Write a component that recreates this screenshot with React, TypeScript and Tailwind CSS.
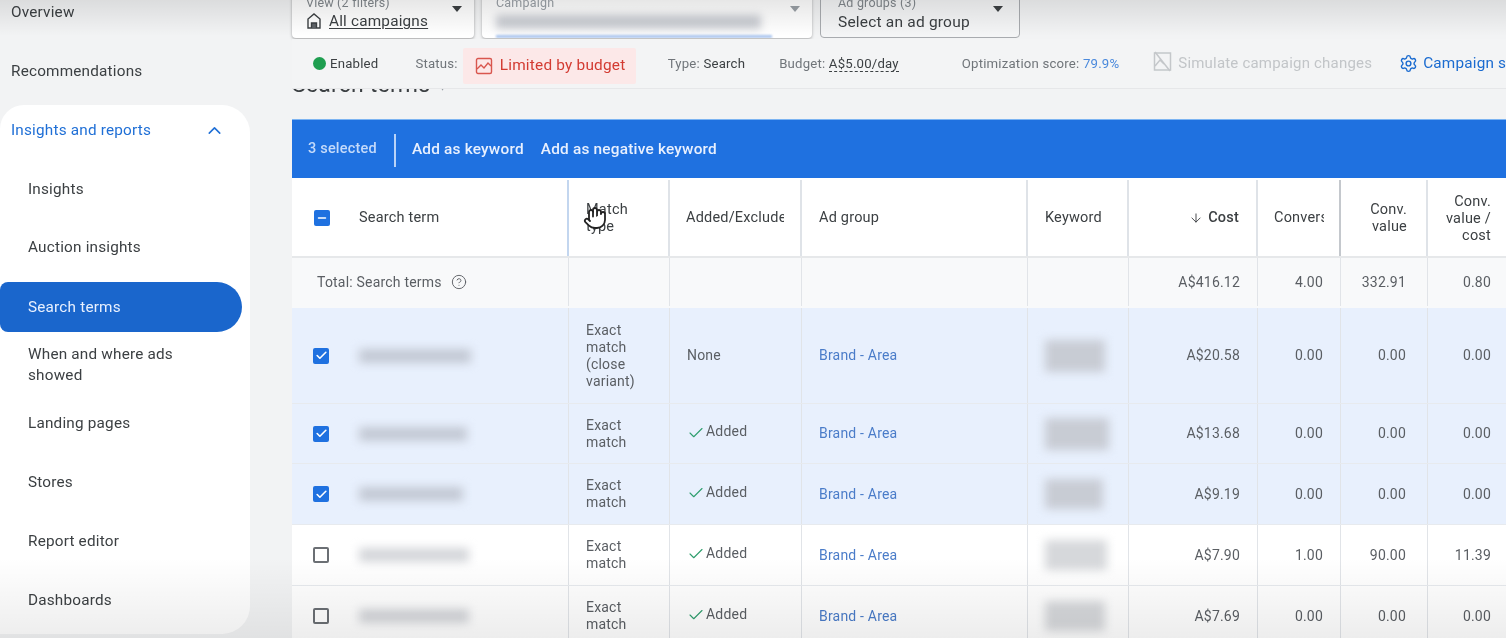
import { ChevronUp, ArrowDown, Check, Settings, HelpCircle, Hand, Minus } from "lucide-react";

const cols = "grid grid-cols-[277px_101px_132px_226px_101px_129px_83px_87px_78px]";
const cell = "border-r border-[#e1e4e8] flex items-center text-[14px]";
const gray = "text-[#5a5e63]";

const rows = [
  { h: "h-[96px]", checked: true, match: "Exact match (close variant)", added: false, cost: "A$20.58", c: "0.00", v: "0.00", r: "0.00", w: "w-[112px]", k: "h-[32px] w-[60px]" },
  { h: "h-[60px]", checked: true, match: "Exact match", added: true, cost: "A$13.68", c: "0.00", v: "0.00", r: "0.00", w: "w-[108px]", k: "h-[32px] w-[64px]" },
  { h: "h-[61px]", checked: true, match: "Exact match", added: true, cost: "A$9.19", c: "0.00", v: "0.00", r: "0.00", w: "w-[104px]", k: "h-[30px] w-[58px]" },
  { h: "h-[61px]", checked: false, match: "Exact match", added: true, cost: "A$7.90", c: "1.00", v: "90.00", r: "11.39", w: "w-[110px]", k: "h-[30px] w-[62px]" },
  { h: "h-[61px]", checked: false, match: "Exact match", added: true, cost: "A$7.69", c: "0.00", v: "0.00", r: "0.00", w: "w-[110px]", k: "h-[30px] w-[60px]" },
];

function NavItem({ label, className = "" }: { label: string; className?: string }) {
  return <div className={`pl-[28px] flex items-center text-[#3c4043] ${className}`}>{label}</div>;
}

export default function App() {
  return (
    <div className="relative w-[1506px] h-[638px] overflow-hidden flex bg-[#f2f3f4] font-['Roboto',sans-serif] text-[15.3px] tracking-[0.2px] blur-[0.4px]">
      {/* Sidebar */}
      <aside className="w-[292px] shrink-0 flex flex-col">
        <div className="h-[105px] pl-[11px] text-[#3c4043] flex flex-col">
          <div className="h-[25px] flex items-center">Overview</div>
          <div className="h-[59px] mt-[17px] flex items-center">Recommendations</div>
        </div>
        <div className="w-[250px] h-[529px] bg-white rounded-r-[28px] rounded-tl-[24px] flex flex-col">
          <div className="h-[50px] pl-[11px] pr-[25px] flex items-center justify-between text-[#1f6fd6]">
            <span>Insights and reports</span>
            <ChevronUp size={21} strokeWidth={1.8} />
          </div>
          <NavItem label="Insights" className="h-[58px] mt-[5px]" />
          <NavItem label="Auction insights" className="h-[58px]" />
          <div className="h-[50px] w-[242px] mt-[6px] bg-[#1a66cc] rounded-r-[25px] rounded-l-[8px] pl-[28px] flex items-center text-[#e8f0fe]">Search terms</div>
          <div className="h-[46px] mt-[10px] pl-[28px] pr-[60px] flex items-center leading-[21px] text-[#3c4043]">When and where ads showed</div>
          <NavItem label="Landing pages" className="h-[49px] mt-[11px]" />
          <NavItem label="Stores" className="h-[59px] mt-[5px]" />
          <NavItem label="Report editor" className="h-[59px]" />
          <NavItem label="Dashboards" className="h-[58px]" />
        </div>
      </aside>

      {/* Main */}
      <main className="flex-1 min-w-0 flex flex-col">
        {/* Selectors */}
        <div className="h-[39px] shrink-0 flex gap-[8px]">
          <div className="w-[182px] h-[50px] -mt-[12px] bg-white rounded-[4px] shadow-[0_1px_3px_rgba(0,0,0,0.35)] px-[14px] pt-[8px] relative">
            <div className="text-[12.5px] leading-[14px] text-[#80868b]">View (2 filters)</div>
            <div className="flex items-center gap-[7px] text-[#3c4043]">
              <svg width="16" height="18" viewBox="0 0 16 18" fill="none" stroke="#3c4043" strokeWidth="1.4"><path d="M2 16V7l6-5 6 5v9z" /><path d="M5.5 16v-5h5v5" fill="#5f6368" /></svg>
              <span className="underline underline-offset-2">All campaigns</span>
            </div>
            <div className="absolute right-[12px] top-[18px] border-x-[5px] border-x-transparent border-t-[6px] border-t-[#3c4043]" />
          </div>
          <div className="w-[330px] h-[50px] -mt-[12px] bg-white rounded-[4px] shadow-[0_1px_3px_rgba(0,0,0,0.3)] px-[14px] pt-[8px] relative overflow-hidden">
            <div className="text-[12.5px] leading-[14px] text-[#9aa0a6]">Campaign</div>
            <div className="mt-[5px] h-[14px] w-[265px] bg-[#c9ccd2] blur-[4px]" />
            <div className="absolute left-[14px] right-[40px] bottom-0 h-[3px] bg-[#a9c4ee] blur-[1px]" />
            <div className="absolute right-[12px] top-[18px] border-x-[5px] border-x-transparent border-t-[6px] border-t-[#9aa0a6]" />
          </div>
          <div className="w-[200px] h-[50px] -mt-[12px] bg-[#f4f5f6] border border-[#a8abaf] rounded-[4px] px-[17px] pt-[7px] relative">
            <div className="text-[12.5px] leading-[14px] text-[#80868b]">Ad groups (3)</div>
            <div className="mt-[1px] text-[15.5px] text-[#3c4043]">Select an ad group</div>
            <div className="absolute right-[16px] top-[17px] border-x-[5px] border-x-transparent border-t-[6px] border-t-[#3c4043]" />
          </div>
        </div>

        {/* Status bar */}
        <div className="relative z-10 h-[50px] shrink-0 bg-[#f3f4f5] border-b border-[#e6e7e9] flex items-center text-[13.2px] text-[#70757a] whitespace-nowrap">
          <span className="ml-[21px] w-[13px] h-[13px] shrink-0 rounded-full bg-[#1e9e50]" />
          <span className="ml-[4px] text-[#3c4043]">Enabled</span>
          <span className="ml-[37px]">Status:</span>
          <div className="ml-[5px] w-[173px] h-[36px] mt-[5px] shrink-0 bg-[#fce8e8] rounded-[2px] flex items-center pl-[12px] gap-[7px] text-[15.4px] text-[#d33b32]">
            <svg width="18" height="18" viewBox="0 0 18 18" fill="none" stroke="#d9564e" strokeWidth="1.4"><rect x="1.5" y="1.5" width="15" height="15" rx="1.5" /><path d="M2 12l4-4 3 3 4-5 3 3" /></svg>
            Limited by budget
          </div>
          <span className="ml-[32px]">Type: <span className="text-[#3c4043]">Search</span></span>
          <span className="ml-[34px]">Budget: <span className="text-[#3c4043] border-b border-dashed border-[#3c4043]">A$5.00/day</span></span>
          <span className="ml-[63px]">Optimization score: <span className="text-[#4a89dc]">79.9%</span></span>
          <svg className="ml-[34px] shrink-0 -mt-[4px]" width="19" height="24" viewBox="0 0 19 24" fill="none" stroke="#c4c7ca" strokeWidth="1.5"><path d="M1.5 3h16v17h-16z" /><path d="M2 2l15 19M2 16l5-6 4 4" /></svg>
          <span className="ml-[6px] text-[15px] text-[#c2c5c8]">Simulate campaign changes</span>
          <Settings className="ml-[27px] shrink-0 text-[#1a6bd0]" size={19} strokeWidth={1.8} />
          <span className="ml-[5px] text-[15.3px] text-[#1a6bd0]">Campaign settings</span>
        </div>

        {/* Clipped heading */}
        <div className="h-[30px] shrink-0 overflow-hidden">
          <div className="-mt-[17px] text-[23px] leading-[26px] text-[#3c4043]">Search terms <span className="ml-[3px] text-[#9aa0a6] text-[14px] align-middle">▾</span></div>
        </div>

        {/* Blue bar */}
        <div className="h-[59px] pt-[2px] shrink-0 bg-[#1f71e0] border-t border-[#7db4f2] flex items-center text-[15.4px] font-medium text-[#e8f0fe] whitespace-nowrap">
          <span className="ml-[16px] text-[14.5px] text-[#c4dafa] -mt-[2px]">3 selected</span>
          <span className="ml-[17px] w-[2px] h-[33px] bg-[#b9d3f8]" />
          <span className="ml-[16px]">Add as keyword</span>
          <span className="ml-[17px]">Add as negative keyword</span>
        </div>

        {/* Table header */}
        <div className={`${cols} h-[80px] pt-[2px] shrink-0 bg-white border-b-2 border-[#e6e8ea] text-[14.5px] text-[#3c4043]`}>
          <div className="border-r-2 border-[#c3d6ef] flex items-center">
            <span className="ml-[22px] w-[16px] h-[16px] rounded-[2px] bg-[#1f71e0] flex items-center justify-center"><Minus size={12} strokeWidth={3} className="text-white" /></span>
            <span className="ml-[29px]">Search term</span>
          </div>
          <div className="relative border-r-2 border-[#dfe3e8] flex items-center pl-[17px] leading-[17px]">
            <span className="w-[60px]">Match type</span>
            <Hand size={24} strokeWidth={1.8} className="absolute left-[14px] top-[26px] text-[#222] fill-white" />
          </div>
          <div className="border-r-2 border-[#dfe3e8] flex items-center pl-[16px] pr-[16px] overflow-hidden whitespace-nowrap">
            <span className="block w-[99px] overflow-hidden">Added/Excluded</span>
          </div>
          <div className="border-r-2 border-[#dfe3e8] flex items-center pl-[17px]">Ad group</div>
          <div className="border-r-2 border-[#dfe3e8] flex items-center pl-[17px]">Keyword</div>
          <div className="border-r-2 border-[#dfe3e8] flex items-center justify-end gap-[5px] pr-[17px] font-medium"><ArrowDown size={14} strokeWidth={1.6} />Cost</div>
          <div className="border-r-2 border-[#c4c8cd] flex items-center pl-[16px]">
            <span className="block w-[50px] overflow-hidden whitespace-nowrap">Conversions</span>
          </div>
          <div className="border-r-2 border-[#dfe3e8] flex items-center justify-end text-right pr-[19px] leading-[17px]"><span className="w-[50px]">Conv. value</span></div>
          <div className="flex items-center justify-end text-right pr-[15px] leading-[17px]"><span className="w-[55px]">Conv. value / cost</span></div>
        </div>

        {/* Total */}
        <div className={`${cols} h-[50px] pb-[2px] shrink-0 bg-[#f8f9fa] text-[#5f6368]`}>
          <div className={`${cell} ${gray} pl-[25px] gap-[9px]`}>Total: Search terms <HelpCircle size={16} strokeWidth={1.4} /></div>
          <div className={cell} />
          <div className={cell} />
          <div className={cell} />
          <div className={cell} />
          <div className={`${cell} ${gray} justify-end pr-[17px]`}>A$416.12</div>
          <div className={`${cell} ${gray} justify-end pr-[17px]`}>4.00</div>
          <div className={`${cell} ${gray} justify-end pr-[21px]`}>332.91</div>
          <div className="flex items-center justify-end pr-[15px] text-[14px] text-[#5a5e63]">0.80</div>
        </div>

        {/* Rows */}
        {rows.map((row, i) => (
          <div key={i} className={`${cols} ${row.h} shrink-0 border-b border-[#e7eaee] ${row.checked ? "bg-[#e8f0fd]" : "bg-white"}`}>
            <div className={cell}>
              {row.checked ? (
                <span className="ml-[21px] w-[16px] h-[16px] rounded-[2px] bg-[#1f71e0] flex items-center justify-center"><Check size={13} strokeWidth={3} className="text-white" /></span>
              ) : (
                <span className="ml-[21px] w-[16px] h-[16px] rounded-[2px] border-2 border-[#6b6f74]" />
              )}
              <span className={`ml-[30px] h-[14px] ${row.w} ${row.checked ? "bg-[#c3c9d4]" : "bg-[#d4d6da]"} blur-[5px]`} />
            </div>
            <div className={`${cell} ${gray} pl-[17px] pr-[20px] leading-[17px]`}>{row.match}</div>
            <div className={`${cell} ${gray} pl-[17px]`}>
              {row.added ? (
                <span className="flex items-center gap-[1px] -mt-[4px]"><Check size={18} strokeWidth={1.5} className="text-[#2f9e6e] mt-[2px]" />Added</span>
              ) : "None"}
            </div>
            <div className={`${cell} pl-[17px] text-[#4a7cc9]`}>Brand - Area</div>
            <div className={`${cell} pl-[17px]`}><span className={`${row.k} ${row.checked ? "bg-[#c8ccd4]" : "bg-[#d6d8db]"} blur-[5px]`} /></div>
            <div className={`${cell} ${gray} justify-end pr-[17px]`}>{row.cost}</div>
            <div className={`${cell} ${gray} justify-end pr-[17px]`}>{row.c}</div>
            <div className={`${cell} ${gray} justify-end pr-[21px]`}>{row.v}</div>
            <div className="flex items-center justify-end pr-[15px] text-[14px] text-[#5a5e63]">{row.r}</div>
          </div>
        ))}
      </main>

      {/* Video vignette */}
      <div className="absolute inset-x-0 top-0 h-[36px] bg-gradient-to-b from-[#00000018] to-transparent pointer-events-none z-20" />
      <div className="absolute inset-x-0 bottom-0 h-[80px] bg-gradient-to-t from-[#00000012] to-transparent pointer-events-none z-20" />
    </div>
  );
}
